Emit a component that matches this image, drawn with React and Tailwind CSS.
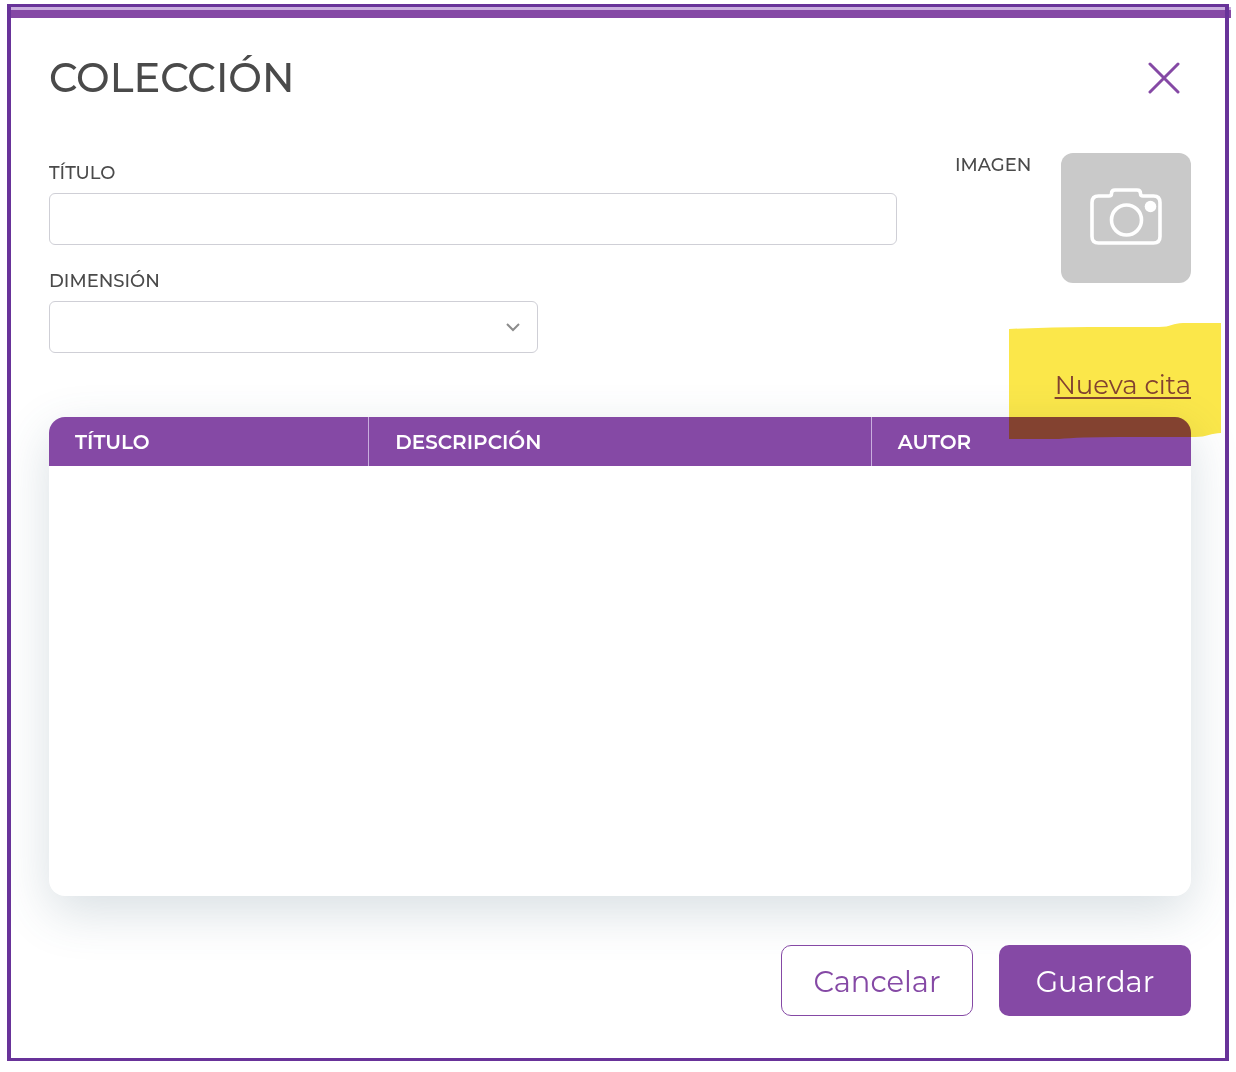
import React from "react";

const labelClass = "block text-[18px] leading-6 font-medium text-[#4a4a4a]";

function CloseIcon() {
  return (
    <svg width="32" height="32" viewBox="0 0 32 32" fill="none" stroke="#8549a5" strokeWidth="3" strokeLinecap="round" aria-hidden="true">
      <path d="M2 2 30 30M30 2 2 30" />
    </svg>
  );
}

function CameraIcon() {
  return (
    <svg width="72" height="58" viewBox="0 0 72 58" fill="none" stroke="white" strokeWidth="3.600" strokeLinejoin="round" aria-hidden="true">
      <path d="M8.500 8H19Q21.500 8 21.500 5.500Q21.500 2 25 2H47Q50.500 2 50.500 5.500Q50.500 8 53 8H63.500Q70 8 70 14.500V48.500Q70 55 63.500 55H8.500Q2 55 2 48.500V14.500Q2 8 8.500 8Z" />
      <circle cx="36.500" cy="32" r="15" />
      <circle cx="60.500" cy="18.500" r="5.800" fill="white" stroke="none" />
    </svg>
  );
}

function Highlight() {
  return (
    <svg
      className="pointer-events-none absolute -top-[46px] -right-[30px] h-[117px] w-[212px] mix-blend-multiply"
      viewBox="0 0 212 117"
      aria-hidden="true"
    >
      <path d="M0 6Q40 4 80 4H150C162 4 164 0 174 0H212V110C202 110 198 114 186 114H110Q70 114 50 116L0 116Z" fill="#fbe74a" />
    </svg>
  );
}

export default function App() {
  return (
    <div className="bg-white px-[7px] pt-1 pb-[11px] font-['Montserrat','Inter',sans-serif]">
      <main className="relative pt-[3px] pr-1 pb-[3px] pl-1">
        <div className="-mr-[6px] h-[11px] border-t-[3px] border-[#c9aede] bg-[#8549a5]" />
        <div className="pt-9 pr-[34px] pb-[42px] pl-[38px]">
          <header className="flex items-center justify-between pr-[11px]">
            <h1 className="text-[40px] leading-[48px] font-medium text-[#4a4a4a]">COLECCIÓN</h1>
            <button type="button" aria-label="Cerrar">
              <CloseIcon />
            </button>
          </header>

          <section className="mt-[51px] flex gap-[58px]">
            <div className="flex-1 pt-2">
              <label htmlFor="titulo" className={labelClass}>TÍTULO</label>
              <input id="titulo" type="text" className="mt-2 block h-[52px] w-full rounded-md border border-[#cfcfd6] bg-white px-4 text-lg" />
              <label htmlFor="dimension" className={`mt-6 ${labelClass}`}>DIMENSIÓN</label>
              <div className="relative mt-2 w-[58%] max-w-[489px]">
                <select id="dimension" className="block h-[52px] w-full appearance-none rounded-md border border-[#cfcfd6] bg-white px-4 text-lg">
                  <option></option>
                </select>
                <svg className="pointer-events-none absolute top-[21px] right-[18px]" width="14" height="10" viewBox="0 0 14 10" fill="none" stroke="#8c8c8c" strokeWidth="2" aria-hidden="true">
                  <path d="M1 2 7 8 13 2" />
                </svg>
              </div>
            </div>
            <div className="flex w-[236px] items-start justify-between">
              <label htmlFor="imagen" className={labelClass}>IMAGEN</label>
              <button id="imagen" type="button" className="flex h-[130px] w-[130px] items-center justify-center rounded-xl bg-[#c9c9c9] pb-0.5">
                <CameraIcon />
              </button>
            </div>
          </section>

          <div className="relative z-10 mt-4 mb-4 flex justify-end mix-blend-multiply">
            <a href="#nueva-cita" className="text-[26px] leading-8 font-normal text-[#8549a5] underline decoration-2 underline-offset-3">Nueva cita</a>
            <Highlight />
          </div>

          <div className="overflow-hidden rounded-2xl bg-white shadow-[0_16px_50px_rgba(60,95,115,0.2)]">
            <table className="w-full table-fixed border-collapse text-left">
              <thead className="bg-[#8549a5] text-[20px] leading-6 text-white">
                <tr className="h-[49px]">
                  <th scope="col" className="w-[28%] border-r border-[#c9aede] pl-[26px] font-semibold">TÍTULO</th>
                  <th scope="col" className="w-[44%] border-r border-[#c9aede] pl-[26px] font-semibold">DESCRIPCIÓN</th>
                  <th scope="col" className="pl-[26px] font-semibold">AUTOR</th>
                </tr>
              </thead>
              <tbody>
                <tr className="h-[430px]">
                  <td colSpan={3}></td>
                </tr>
              </tbody>
            </table>
          </div>

          <footer className="relative mt-[49px] flex justify-end gap-[26px] text-[29px] leading-9 font-normal">
            <button type="button" className="h-[71px] w-48 rounded-[10px] border border-[#8549a5] bg-white pt-0.5 text-[#8549a5]">Cancelar</button>
            <button type="button" className="h-[71px] w-48 rounded-[10px] bg-[#8549a5] pt-0.5 text-white">Guardar</button>
          </footer>
        </div>
        <div className="pointer-events-none absolute inset-0 border-x-4 border-y-[3px] border-[#683399]" />
      </main>
    </div>
  );
}
